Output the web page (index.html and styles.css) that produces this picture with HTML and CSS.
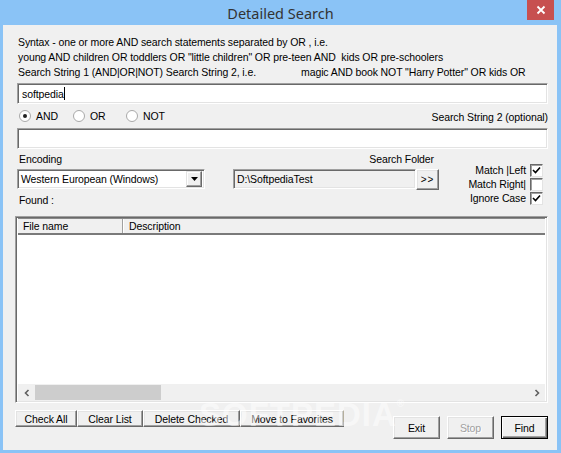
FILE: index.html
```html
<!DOCTYPE html>
<html>
<head>
<meta charset="utf-8">
<title>Detailed Search</title>
<link rel="stylesheet" href="styles.css">
</head>
<body>
<div class="window">
  <div class="titlebar">
    <span class="title">Detailed Search</span>
    <div class="close">
      <svg width="10" height="10" viewBox="0 0 10 10"><path d="M1.5 1.5 L8.5 8.5 M8.5 1.5 L1.5 8.5" stroke="#fff" stroke-width="1.8"/></svg>
    </div>
  </div>
  <div class="client">
    <div class="syntax">
      <div>Syntax - one or more AND search statements separated by OR , i.e.</div>
      <div>young AND children OR toddlers OR "little children" OR pre-teen AND&nbsp; kids OR pre-schoolers</div>
      <div><span class="s1">Search String 1 (AND|OR|NOT) Search String 2, i.e.</span><span>magic AND book NOT "Harry Potter" OR kids OR</span></div>
    </div>
    <div class="field input1"><span>softpedia</span><span class="caret"></span></div>
    <div class="radios">
      <div class="radio r-and">
        <svg width="12" height="12" viewBox="0 0 12 12"><circle cx="6" cy="6" r="5.5" fill="#fff" stroke="#a8a8a8"/><circle cx="6" cy="6" r="2" fill="#222"/></svg>
        <span>AND</span>
      </div>
      <div class="radio r-or">
        <svg width="12" height="12" viewBox="0 0 12 12"><circle cx="6" cy="6" r="5.5" fill="#fff" stroke="#a8a8a8"/></svg>
        <span>OR</span>
      </div>
      <div class="radio r-not">
        <svg width="12" height="12" viewBox="0 0 12 12"><circle cx="6" cy="6" r="5.5" fill="#fff" stroke="#a8a8a8"/></svg>
        <span>NOT</span>
      </div>
      <span class="optional">Search String 2 (optional)</span>
    </div>
    <div class="field input2"></div>
    <div class="options">
      <div class="enc-col">
        <div class="lbl enc-lbl">Encoding</div>
        <div class="combo">
          <span class="combo-text">Western European (Windows)</span>
          <span class="combo-btn"><svg width="7" height="4" viewBox="0 0 7 4"><path d="M0 0 H7 L3.5 4 Z" fill="#000"/></svg></span>
        </div>
        <div class="lbl found">Found :</div>
      </div>
      <div class="folder-col">
        <div class="lbl folder-lbl">Search Folder</div>
        <div class="folder-row">
          <div class="field path">D:\SoftpediaTest</div>
          <div class="btn browse">&gt;&gt;</div>
        </div>
      </div>
      <div class="checks">
        <div class="check-row"><span>Match |Left</span><span class="cb"><svg width="9" height="9" viewBox="0 0 9 9"><path d="M1 4 L3.5 6.5 L8 1.5" stroke="#000" stroke-width="1.6" fill="none"/></svg></span></div>
        <div class="check-row"><span>Match Right|</span><span class="cb"></span></div>
        <div class="check-row"><span>Ignore Case</span><span class="cb"><svg width="9" height="9" viewBox="0 0 9 9"><path d="M1 4 L3.5 6.5 L8 1.5" stroke="#000" stroke-width="1.6" fill="none"/></svg></span></div>
      </div>
    </div>
    <div class="list">
      <div class="list-header">
        <div class="col c1">File name</div>
        <div class="col c2">Description</div>
      </div>
      <div class="list-body"></div>
      <div class="hscroll">
        <span class="arrow"><svg width="6" height="8" viewBox="0 0 6 8"><path d="M4.5 1 L1.5 4 L4.5 7" stroke="#606060" stroke-width="1.6" fill="none"/></svg></span>
        <div class="track"><div class="thumb"></div></div>
        <span class="arrow"><svg width="6" height="8" viewBox="0 0 6 8"><path d="M1.5 1 L4.5 4 L1.5 7" stroke="#606060" stroke-width="1.6" fill="none"/></svg></span>
      </div>
    </div>
    <div class="bottom">
      <div class="tools">
        <div class="btn tool t1">Check All</div>
        <div class="btn tool t2">Clear List</div>
        <div class="btn tool t3">Delete Checked</div>
        <div class="btn tool t4">Move to Favorites</div>
      </div>
      <div class="actions">
        <div class="btn action">Exit</div>
        <div class="btn action disabled">Stop</div>
        <div class="btn action default">Find</div>
      </div>
    </div>
    <div class="watermark">SOFTPEDIA<sup>®</sup></div>
  </div>
</div>
</body>
</html>
```

FILE: styles.css
```css
* { box-sizing: border-box; }

html, body {
  margin: 0;
  padding: 0;
}

body {
  width: 561px;
  height: 453px;
  background: #8ac3f6;
  font-family: "Liberation Sans", Arial, sans-serif;
  font-size: 10.5px;
  letter-spacing: -0.1px;
  color: #000;
  overflow: hidden;
}

.window {
  display: flex;
  flex-direction: column;
  width: 561px;
  height: 453px;
}

.titlebar {
  position: relative;
  height: 25px;
  display: flex;
  align-items: center;
  justify-content: center;
}

.title {
  font-family: "Noto Sans", "Open Sans", sans-serif;
  font-size: 14.5px;
  letter-spacing: 0;
  color: #333;
  margin-top: 1px;
}

.close {
  position: absolute;
  top: 0;
  right: 7px;
  width: 27px;
  height: 20px;
  background: #c75050;
  display: flex;
  align-items: center;
  justify-content: center;
}

.client {
  position: relative;
  margin: 0 4px 3px 3px;
  height: 425px;
  background: #f0f0f0;
  padding-top: 10px;
}

.syntax {
  padding-left: 15px;
  line-height: 15px;
  white-space: nowrap;
}

.s1 {
  display: inline-block;
  width: 283px;
}

.field {
  background: #fff;
  border: 1px solid;
  border-color: #a0a0a0 #fff #fff #a0a0a0;
  box-shadow: inset 1px 1px #696969, inset -1px -1px #e3e3e3;
}

.input1 {
  margin: 3px 9px 0 14px;
  height: 21px;
  padding-left: 4px;
  display: flex;
  align-items: center;
}

.caret {
  display: inline-block;
  width: 1px;
  height: 13px;
  background: #000;
}

.radios {
  margin-top: 4px;
  height: 16px;
  display: flex;
  align-items: center;
  padding: 0 9px 0 16px;
}

.radio {
  display: flex;
  align-items: center;
}

.radio svg { margin-right: 5px; }

.r-and { width: 54px; }
.r-or { width: 53px; }

.optional {
  margin-left: auto;
  margin-top: 1px;
}

.input2 {
  margin: 4px 9px 0 14px;
  height: 21px;
}

.options {
  display: flex;
  height: 67px;
}

.lbl {
  line-height: 13px;
  white-space: nowrap;
}

.enc-col {
  margin-left: 14px;
  width: 188px;
}

.enc-lbl {
  padding: 4px 0 0 2px;
}

.combo {
  margin-top: 3px;
  height: 20px;
  display: flex;
  align-items: center;
  background: #fff;
  border: 1px solid;
  border-color: #a0a0a0 #fff #fff #a0a0a0;
  box-shadow: inset 1px 1px #696969, inset -1px -1px #e3e3e3;
  padding: 2px;
}

.combo-text {
  flex: 1;
  padding-left: 1px;
}

.combo-btn {
  width: 16px;
  height: 16px;
  background: #f0f0f0;
  border: 1px solid;
  border-color: #e3e3e3 #696969 #696969 #e3e3e3;
  box-shadow: inset -1px -1px #a0a0a0, inset 1px 1px #fff;
  display: flex;
  align-items: center;
  justify-content: center;
}

.found {
  margin-top: 5px;
  padding-left: 2px;
}

.folder-col {
  margin-left: 28px;
  width: 206px;
}

.folder-lbl {
  padding-top: 4px;
  text-align: right;
  padding-right: 5px;
}

.folder-row {
  margin-top: 3px;
  display: flex;
}

.path {
  width: 183px;
  height: 20px;
  background: #f0f0f0;
  padding: 3px 0 0 3px;
}

.btn {
  background: #f0f0f0;
  border: 1px solid;
  border-color: #fff #696969 #696969 #fff;
  box-shadow: inset -1px -1px #a0a0a0, inset 1px 1px #e3e3e3;
  display: flex;
  align-items: center;
  justify-content: center;
  white-space: nowrap;
}

.browse {
  width: 23px;
  height: 21px;
  font-size: 10px;
  letter-spacing: 1px;
}

.checks {
  margin-left: auto;
  margin-right: 14px;
  padding-top: 14px;
}

.check-row {
  height: 14px;
  display: flex;
  align-items: center;
  justify-content: flex-end;
}

.cb {
  width: 13px;
  height: 13px;
  margin-left: 4px;
  background: #fff;
  border: 1px solid;
  border-color: #696969 #e3e3e3 #e3e3e3 #696969;
  box-shadow: inset 1px 1px #a0a0a0;
  display: flex;
  align-items: center;
  justify-content: center;
}

.list {
  margin: 0 9px 0 12px;
  height: 187px;
  background: #fff;
  border: 1px solid;
  border-color: #a0a0a0 #fff #fff #a0a0a0;
  box-shadow: inset 1px 1px #696969, inset -1px -1px #e3e3e3;
  padding: 2px 2px 1px 2px;
  display: flex;
  flex-direction: column;
}

.list-header {
  display: flex;
  height: 17px;
  background: #f0f0f0;
  border-bottom: 2px solid #7a7a7a;
  border-top: 1px solid #888;
  margin-top: -1px;
}

.col {
  display: flex;
  align-items: center;
  padding-left: 5px;
}

.c1 {
  width: 105px;
  border-right: 1px solid #a0a0a0;
  box-shadow: 1px 0 #fff;
}

.c2 { padding-left: 6px; }

.list-body { flex: 1; }

.hscroll {
  height: 17px;
  display: flex;
  align-items: center;
  background: #f0f0f0;
}

.arrow {
  width: 17px;
  height: 17px;
  display: flex;
  align-items: center;
  justify-content: center;
}

.track {
  flex: 1;
  height: 17px;
  padding: 1px 0;
}

.thumb {
  width: 126px;
  height: 15px;
  background: #cdcdcd;
}

.bottom {
  display: flex;
  align-items: flex-start;
  margin-top: 7px;
  padding: 0 9px 0 12px;
}

.tools { display: flex; }

.tool { height: 17px; }
.t1 { width: 62px; }
.t2 { width: 66px; }
.t3 { width: 97px; }
.t4 { width: 104px; }

.actions {
  margin-left: auto;
  margin-top: 6px;
  display: flex;
  gap: 7px;
}

.action {
  width: 47px;
  height: 23px;
}

.disabled {
  color: #a0a0a0;
  text-shadow: 1px 1px #fff;
}

.default {
  border-color: #000;
  box-shadow: inset 1px 1px #fff, inset -1px -1px #696969, inset -2px -2px #a0a0a0;
}

.watermark {
  position: absolute;
  left: 196px;
  top: 371px;
  font-family: "Liberation Sans", Arial, sans-serif;
  font-weight: bold;
  font-size: 33px;
  letter-spacing: 1px;
  color: rgba(255, 255, 255, 0.5);
  pointer-events: none;
}

.watermark sup {
  font-size: 10px;
  vertical-align: top;
  position: relative;
  top: 2px;
}
```
